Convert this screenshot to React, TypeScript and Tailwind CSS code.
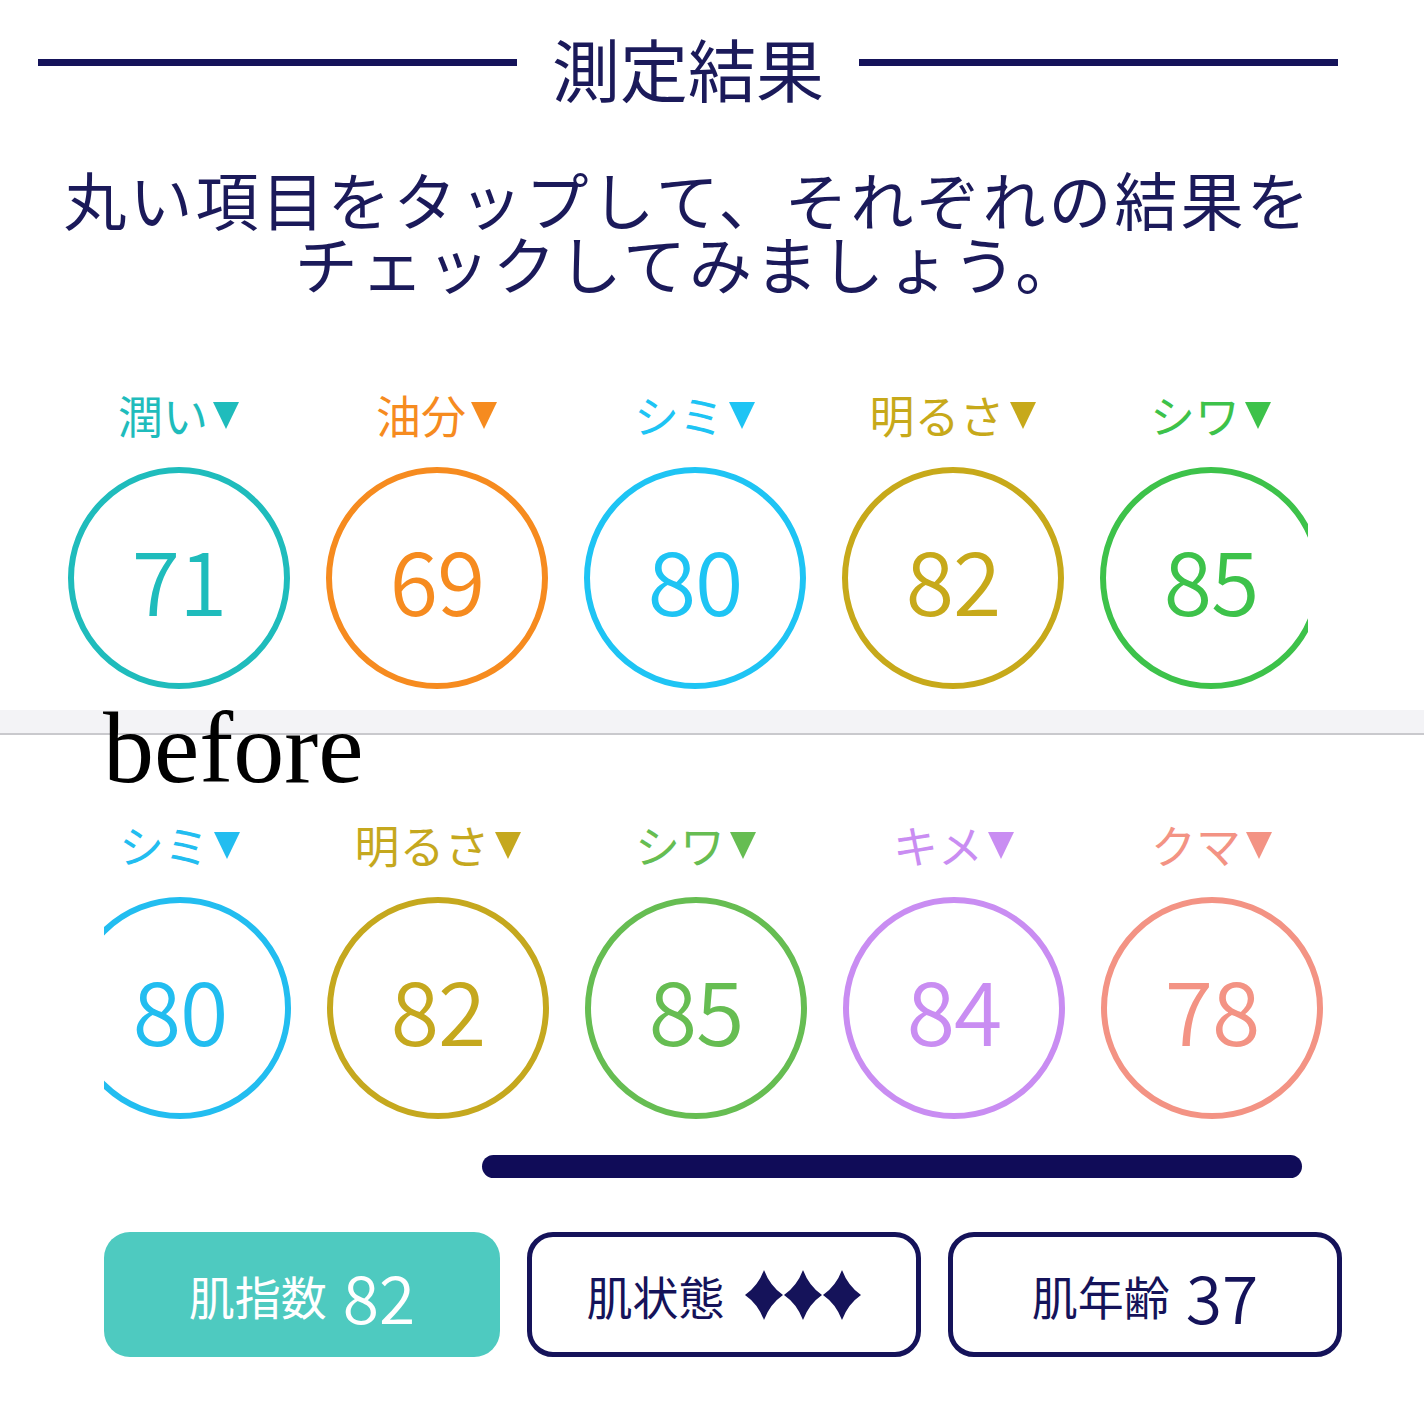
import React from "react";

type Item = { label: string; value: string; color: string };

const topItems: Item[] = [
  { label: "潤い", value: "71", color: "#1fbcbc" },
  { label: "油分", value: "69", color: "#f68b1f" },
  { label: "シミ", value: "80", color: "#1ec4f4" },
  { label: "明るさ", value: "82", color: "#c7a91a" },
  { label: "シワ", value: "85", color: "#3dc24a" },
];

const bottomItems: Item[] = [
  { label: "シミ", value: "80", color: "#22bdf0" },
  { label: "明るさ", value: "82", color: "#c5a81e" },
  { label: "シワ", value: "85", color: "#66bd52" },
  { label: "キメ", value: "84", color: "#c98df2" },
  { label: "クマ", value: "78", color: "#f39384" },
];

const jp = "font-['Noto_Sans_CJK_JP','Noto_Sans',sans-serif]";

function Triangle({ color }: { color: string }) {
  return (
    <svg width="28" height="30" viewBox="0 0 28 30" className="ml-[4px]">
      <polygon points="1,2 27,2 14,29" fill={color} />
    </svg>
  );
}

function Gauge({ item }: { item: Item }) {
  return (
    <div className="flex w-[222px] shrink-0 flex-col items-center">
      <div className="mb-[24px] flex h-[56px] items-center">
        <span className="text-[45px] leading-[56px]" style={{ color: item.color }}>
          {item.label}
        </span>
        <Triangle color={item.color} />
      </div>
      <div
        className="flex h-[222px] w-[222px] items-center justify-center rounded-full border-[6px]"
        style={{ borderColor: item.color }}
      >
        <span className="text-[88px] font-[350] leading-none tracking-[-1px]" style={{ color: item.color }}>
          {item.value}
        </span>
      </div>
    </div>
  );
}

function Diamond() {
  return (
    <svg width="40" height="50" viewBox="0 0 40 50" className="-mx-[0.5px]">
      <path d="M20 0 Q26 16 39 25 Q26 34 20 50 Q14 34 1 25 Q14 16 20 0 Z" fill="#15135a" />
    </svg>
  );
}

export default function App() {
  return (
    <div className={`relative h-[1424px] w-[1424px] overflow-hidden bg-white ${jp}`}>
      {/* header */}
      <div className="w-[1376px] pt-[30px]">
        <div className="flex h-[76px] items-center gap-[35px] px-[38px]">
          <div className="mb-[12px] h-[7px] flex-1 bg-[#15135a]" />
          <h1 className="text-[68px] leading-none text-[#1b1a5a]">測定結果</h1>
          <div className="mb-[12px] h-[7px] flex-1 bg-[#15135a]" />
        </div>
        <p className="mt-[60px] text-center text-[63px] leading-[64px] tracking-[3px] text-[#1b1a5a]">
          丸い項目をタップして、それぞれの結果を
          <br />
          チェックしてみましょう。
        </p>
      </div>

      {/* top gauges */}
      <div className="mt-[93px] w-[1308px] overflow-hidden">
        <div className="flex gap-[36px] pl-[68px]">
          {topItems.map((it) => (
            <Gauge key={it.label} item={it} />
          ))}
        </div>
      </div>

      {/* divider band */}
      <div className="mt-[21px] h-[25px] border-b-2 border-[#c9c9cd] bg-[#f3f3f6]" />

      {/* bottom gauges */}
      <div className="ml-[104px] mt-[82px] overflow-hidden">
        <div className="-ml-[35px] flex gap-[36px]">
          {bottomItems.map((it) => (
            <Gauge key={it.label} item={it} />
          ))}
        </div>
      </div>

      {/* scroll indicator */}
      <div className="ml-[482px] mt-[36px] h-[23px] w-[820px] rounded-full bg-[#100c58]" />

      {/* summary buttons */}
      <div className="ml-[104px] mt-[54px] flex gap-[27px]">
        <div className="flex h-[125px] w-[396px] items-center justify-center gap-[16px] rounded-[26px] bg-[#4ecac0] text-white">
          <span className="text-[46px] leading-none">肌指数</span>
          <span className="text-[66px] font-[350] leading-none">82</span>
        </div>
        <div className="flex h-[125px] w-[394px] items-center justify-center gap-[20px] rounded-[26px] border-[5px] border-[#15135a] text-[#15135a]">
          <span className="text-[46px] leading-none">肌状態</span>
          <span className="flex">
            <Diamond />
            <Diamond />
            <Diamond />
          </span>
        </div>
        <div className="flex h-[125px] w-[394px] items-center justify-center gap-[16px] rounded-[26px] border-[5px] border-[#15135a] text-[#15135a]">
          <span className="text-[46px] leading-none">肌年齢</span>
          <span className="text-[66px] font-[350] leading-none">37</span>
        </div>
      </div>

      {/* overlay caption */}
      <div className="absolute left-[103px] top-[697px] font-['Liberation_Serif','Times_New_Roman',serif] text-[102px] leading-none text-black">
        before
      </div>
    </div>
  );
}
